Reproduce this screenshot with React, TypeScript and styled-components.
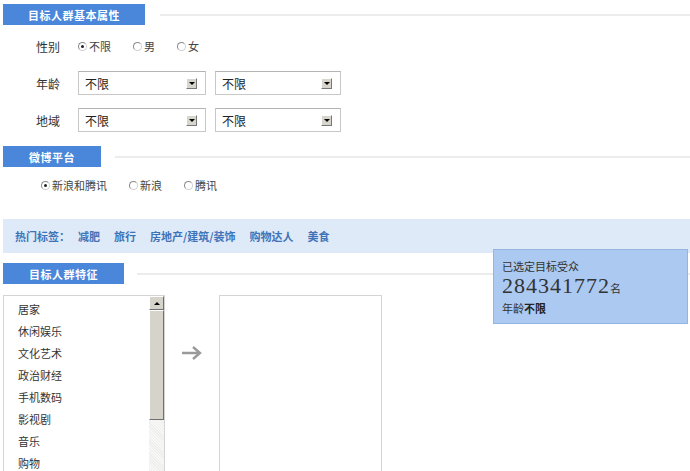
import React from "react";
import styled, { createGlobalStyle } from "styled-components";

const Global = createGlobalStyle`
  html, body { margin: 0; padding: 0; background: #fff; overflow: hidden; }
  body { font-family: "Noto Sans CJK SC", "Noto Sans", sans-serif; color: #333; }
`;

const Page = styled.div`
  position: relative;
  width: 690px;
  height: 471px;
  padding-top: 4px;
  box-sizing: border-box;
  overflow: hidden;
`;

const SectionHeader = styled.div<{ $mt?: number }>`
  display: flex;
  align-items: center;
  margin-top: ${(p) => p.$mt ?? 0}px;
  padding-left: 3px;
`;

const Tab = styled.div<{ $w: number }>`
  width: ${(p) => p.$w}px;
  height: 21px;
  background: #4a86d9;
  color: #fff;
  font-size: 11px;
  font-weight: bold;
  display: flex;
  align-items: center;
  justify-content: center;
  letter-spacing: 0.5px;
`;

const Rule = styled.div<{ $ml: number }>`
  flex: 1;
  height: 2px;
  background: #ececec;
  margin-left: ${(p) => p.$ml}px;
`;

const Form = styled.div`
  display: flex;
  flex-direction: column;
  gap: 13px;
  margin-top: 9px;
  padding-left: 36px;
`;

const Row = styled.div`
  display: flex;
  align-items: center;
  height: 24px;
`;

const Label = styled.div`
  width: 42px;
  font-size: 12px;
  color: #333;
`;

const RadioGroup = styled.div<{ $pl?: number }>`
  display: flex;
  align-items: center;
  gap: 22px;
  padding-left: ${(p) => p.$pl ?? 0}px;
`;

const Option = styled.label`
  display: flex;
  align-items: center;
  gap: 2px;
  font-size: 11px;
  color: #444;
`;

const Dot = styled.span<{ $on?: boolean }>`
  width: 7px;
  height: 7px;
  border-radius: 50%;
  border: 1px solid #8a8a8a;
  border-right-color: #d0d0d0;
  border-bottom-color: #d0d0d0;
  background: #fff;
  position: relative;
  box-sizing: content-box;
  &::after {
    content: "";
    display: ${(p) => (p.$on ? "block" : "none")};
    position: absolute;
    left: 2px;
    top: 2px;
    width: 3px;
    height: 3px;
    border-radius: 50%;
    background: #222;
  }
`;

const Selects = styled.div`
  display: flex;
  gap: 9px;
`;

const Select = styled.div<{ $w: number }>`
  width: ${(p) => p.$w}px;
  height: 24px;
  box-sizing: border-box;
  border: 1px solid #c8c8c8;
  border-top-color: #b4b4b4;
  display: flex;
  align-items: center;
  justify-content: space-between;
  padding: 0 8px 0 6px;
  font-size: 12px;
  color: #222;
  background: #fff;
`;

const DropBtn = styled.span`
  width: 11px;
  height: 11px;
  box-sizing: border-box;
  background: #d8d5cc;
  border: 1px solid #fff;
  border-right-color: #777;
  border-bottom-color: #777;
  display: flex;
  align-items: center;
  justify-content: center;
  &::after {
    content: "";
    border-left: 3px solid transparent;
    border-right: 3px solid transparent;
    border-top: 3px solid #000;
  }
`;

const PlatformRow = styled.div`
  height: 18px;
  display: flex;
  align-items: center;
  margin-top: 9px;
`;

const TagBar = styled.div`
  margin: 25px 0 0 3px;
  height: 34px;
  background: #dfeaf8;
  display: flex;
  align-items: center;
  padding-left: 12px;
  gap: 14px;
  font-size: 11px;
  font-weight: bold;
  color: #3f73b8;
`;

const TagTitle = styled.span`
  margin-right: -6px;
`;

const Tag = styled.span``;

const Lists = styled.div`
  display: flex;
  align-items: flex-start;
  margin-top: 11px;
  padding-left: 3px;
`;

const ListBox = styled.div`
  width: 162px;
  height: 200px;
  box-sizing: border-box;
  border: 1px solid #d4d4d4;
  display: flex;
`;

const Items = styled.div`
  flex: 1;
  padding: 2px 0 0 14px;
  display: flex;
  flex-direction: column;
`;

const Item = styled.div`
  height: 22px;
  line-height: 22px;
  font-size: 11px;
  color: #333;
`;

const ScrollBar = styled.div`
  width: 15px;
  display: flex;
  flex-direction: column;
  background: repeating-linear-gradient(45deg, #eeeeec 0 1px, #f8f8f6 1px 2px);
`;

const ScrollUp = styled.div`
  height: 14px;
  box-sizing: border-box;
  background: #d6d3cb;
  border: 1px solid #fff;
  border-right-color: #6f6f6f;
  border-bottom-color: #6f6f6f;
  display: flex;
  align-items: center;
  justify-content: center;
  &::after {
    content: "";
    border-left: 3px solid transparent;
    border-right: 3px solid transparent;
    border-bottom: 3px solid #000;
  }
`;

const Thumb = styled.div`
  height: 110px;
  box-sizing: border-box;
  background: #d6d3cb;
  border: 1px solid #fff;
  border-right-color: #6f6f6f;
  border-bottom-color: #6f6f6f;
`;

const ArrowCol = styled.div`
  width: 54px;
  height: 66px;
  display: flex;
  align-items: flex-end;
  justify-content: center;
  color: #9a9a9a;
`;

const EmptyBox = styled.div`
  width: 163px;
  height: 200px;
  box-sizing: border-box;
  border: 1px solid #d4d4d4;
`;

const Summary = styled.div`
  position: absolute;
  left: 493px;
  top: 249px;
  width: 195px;
  height: 75px;
  box-sizing: border-box;
  background: #abc9f1;
  border: 1px solid #94b4e2;
  padding: 9px 0 0 8px;
  color: #333;
`;

const SumTitle = styled.div`
  font-size: 11px;
  line-height: 15px;
`;

const Count = styled.div`
  font-family: "Liberation Serif", serif;
  font-size: 22px;
  line-height: 23px;
  letter-spacing: 1px;
  color: #333;
`;

const Unit = styled.span`
  font-family: "Noto Sans CJK SC", sans-serif;
  font-size: 11px;
  letter-spacing: 0;
`;

const SumLine = styled.div`
  font-size: 11px;
  line-height: 16px;
  b { font-weight: bold; color: #222; }
`;

const categories = ["居家", "休闲娱乐", "文化艺术", "政治财经", "手机数码", "影视剧", "音乐", "购物"];

function Radio({ label, on }: { label: string; on?: boolean }) {
  return (
    <Option>
      <Dot $on={on} />
      {label}
    </Option>
  );
}

function Sel({ w }: { w: number }) {
  return (
    <Select $w={w}>
      <span>不限</span>
      <DropBtn />
    </Select>
  );
}

export default function App() {
  return (
    <Page>
      <Global />
      <SectionHeader>
        <Tab $w={142}>目标人群基本属性</Tab>
        <Rule $ml={15} />
      </SectionHeader>
      <Form>
        <Row>
          <Label>性别</Label>
          <RadioGroup>
            <Radio label="不限" on />
            <Radio label="男" />
            <Radio label="女" />
          </RadioGroup>
        </Row>
        <Row>
          <Label>年龄</Label>
          <Selects>
            <Sel w={128} />
            <Sel w={126} />
          </Selects>
        </Row>
        <Row>
          <Label>地域</Label>
          <Selects>
            <Sel w={128} />
            <Sel w={126} />
          </Selects>
        </Row>
      </Form>
      <SectionHeader $mt={14}>
        <Tab $w={98}>微博平台</Tab>
        <Rule $ml={14} />
      </SectionHeader>
      <PlatformRow>
        <RadioGroup $pl={41}>
          <Radio label="新浪和腾讯" on />
          <Radio label="新浪" />
          <Radio label="腾讯" />
        </RadioGroup>
      </PlatformRow>
      <TagBar>
        <TagTitle>热门标签：</TagTitle>
        <Tag>减肥</Tag>
        <Tag>旅行</Tag>
        <Tag>房地产/建筑/装饰</Tag>
        <Tag>购物达人</Tag>
        <Tag>美食</Tag>
      </TagBar>
      <SectionHeader $mt={10}>
        <Tab $w={121}>目标人群特征</Tab>
        <Rule $ml={13} />
      </SectionHeader>
      <Lists>
        <ListBox>
          <Items>
            {categories.map((c) => (
              <Item key={c}>{c}</Item>
            ))}
          </Items>
          <ScrollBar>
            <ScrollUp />
            <Thumb />
          </ScrollBar>
        </ListBox>
        <ArrowCol>
          <svg width="22" height="16" viewBox="0 0 22 16">
            <path d="M1 8h18M12 2l7 6-7 6" fill="none" stroke="#9a9a9a" strokeWidth="2.4" />
          </svg>
        </ArrowCol>
        <EmptyBox />
      </Lists>
      <Summary>
        <SumTitle>已选定目标受众</SumTitle>
        <Count>
          284341772<Unit>名</Unit>
        </Count>
        <SumLine>
          年龄<b>不限</b>
        </SumLine>
      </Summary>
    </Page>
  );
}
